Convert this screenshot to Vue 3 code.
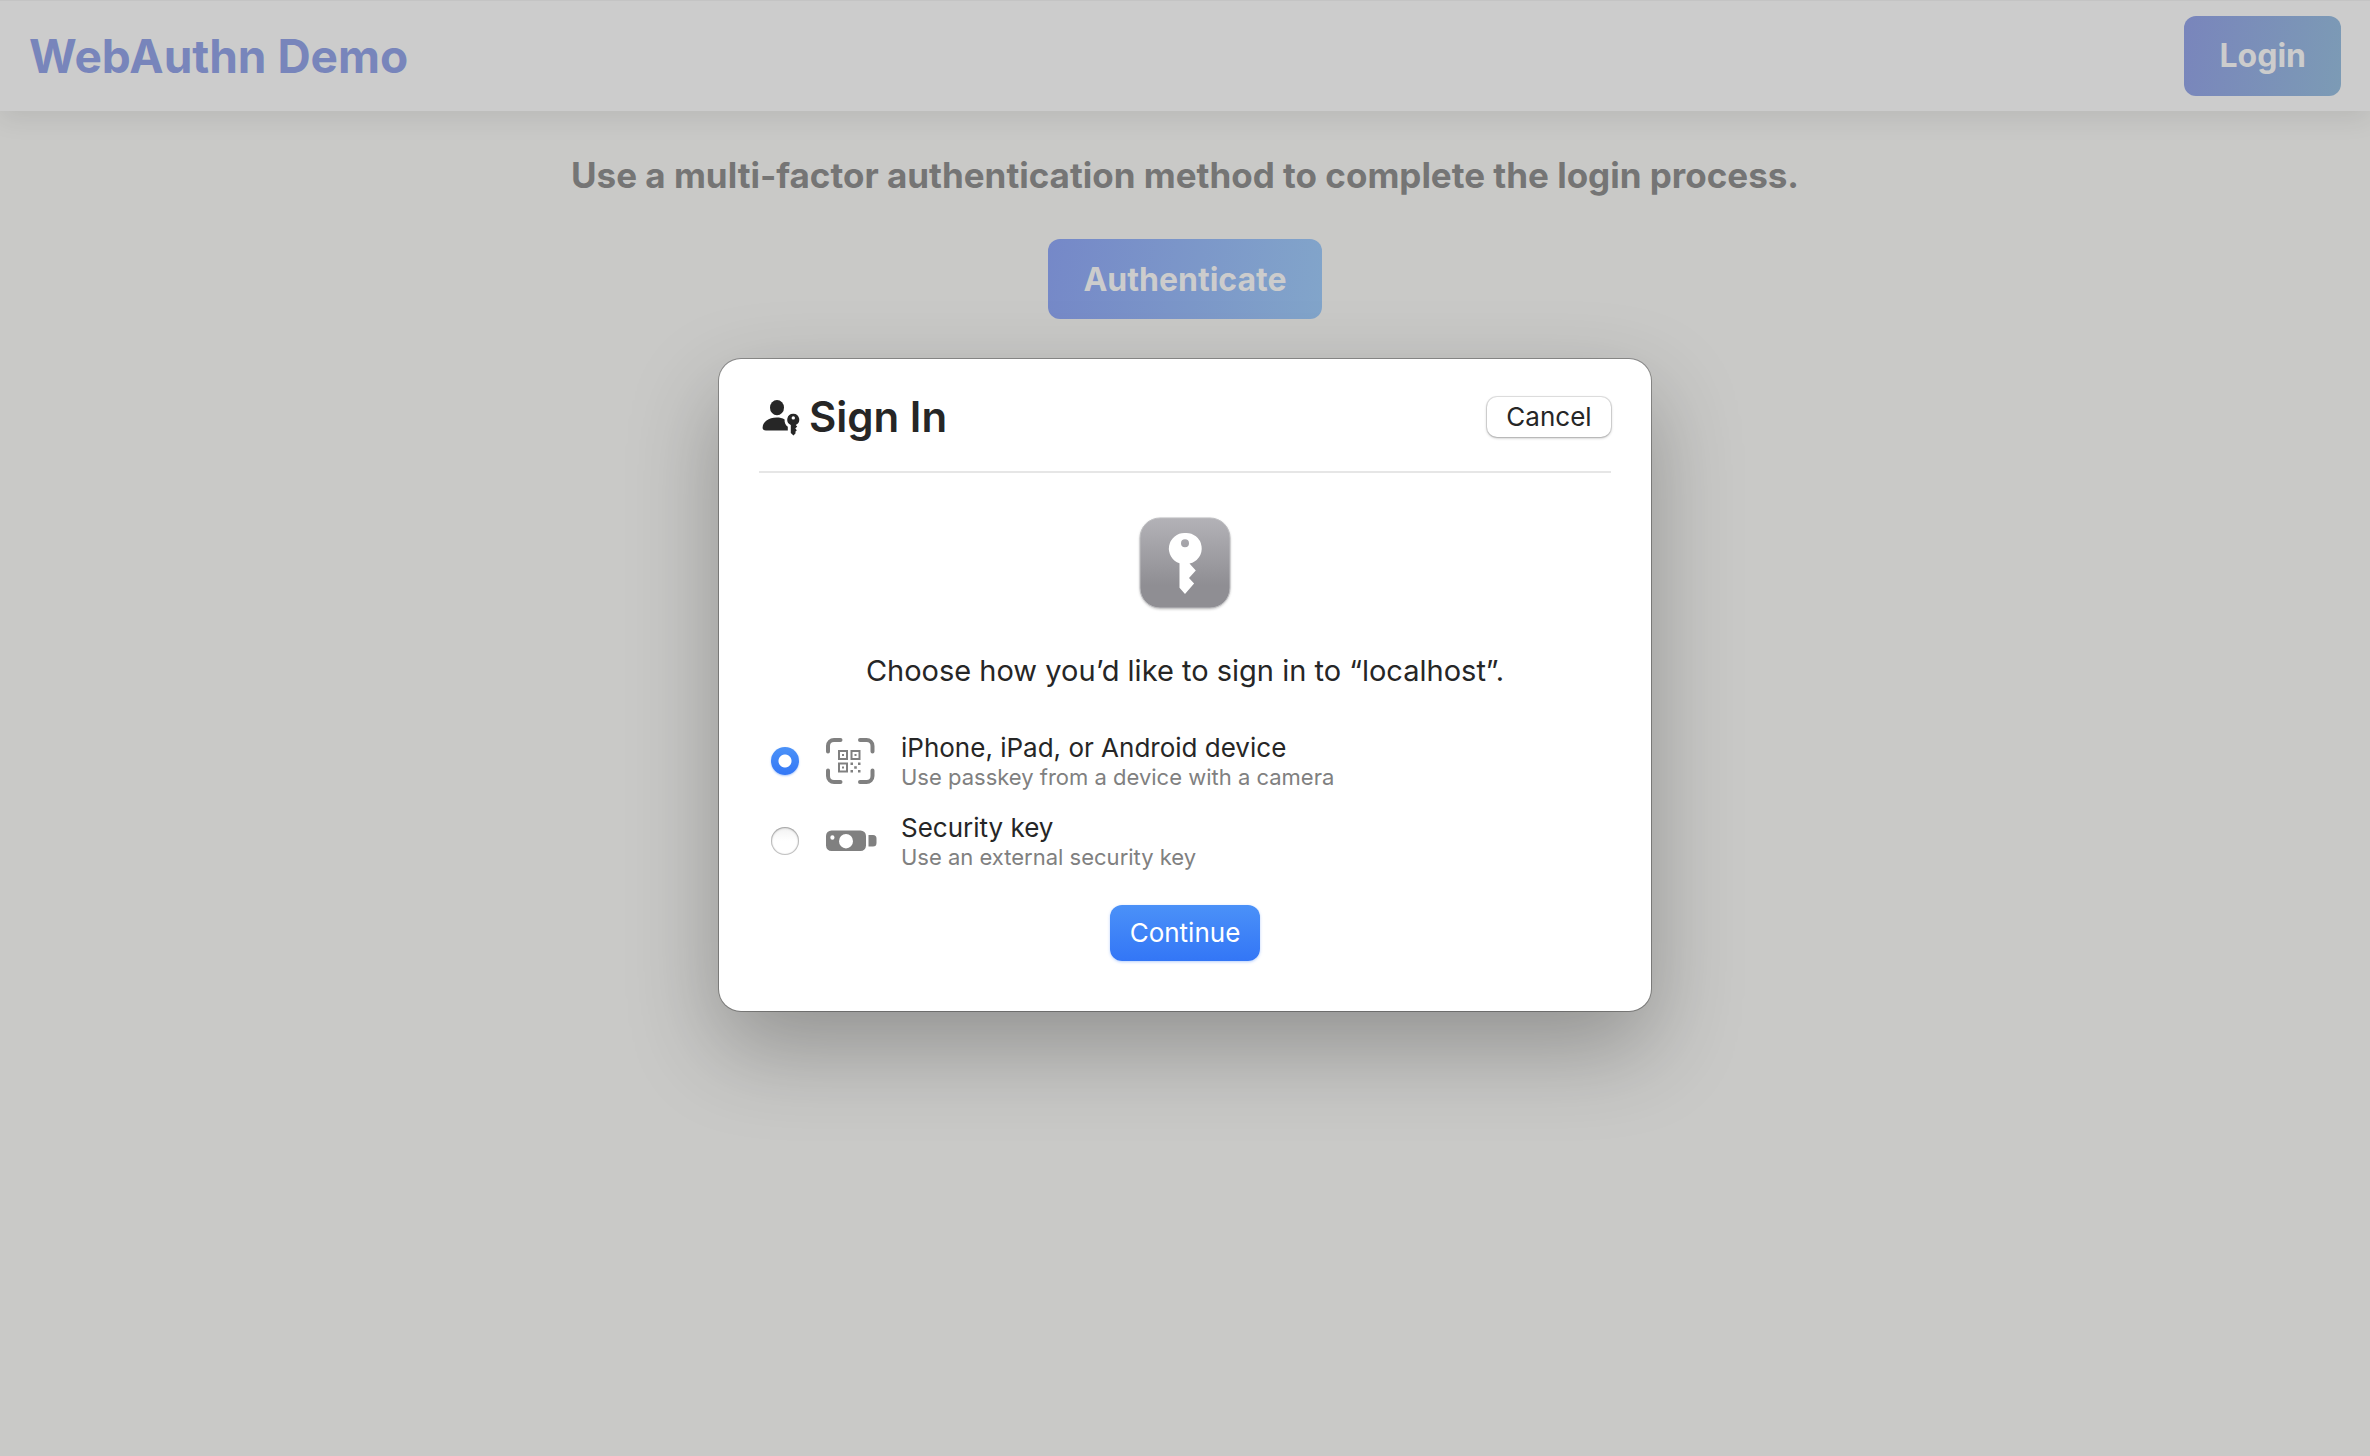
<script setup>
import { ref } from 'vue'

const method = ref('device')
</script>

<template>
  <div class="page">
    <header class="topbar">
      <a class="brand" href="#">WebAuthn Demo</a>
      <button class="btn btn-login" type="button">Login</button>
    </header>

    <main class="content">
      <h1 class="headline">Use a multi-factor authentication method to complete the login process.</h1>
      <button class="btn btn-auth" type="button">Authenticate</button>
    </main>

    <div class="overlay">
      <section class="sheet" role="dialog" aria-modal="true" aria-labelledby="sheet-title">
        <div class="sheet-head">
          <svg class="person" viewBox="0 -2 38 40" width="38" height="40" aria-hidden="true">
            <ellipse cx="15" cy="8.700" rx="7" ry="7.600" fill="#262626" />
            <path d="M4 31.500C1.700 31.500.600 30.500.600 28.500.600 23.500 6.500 18.600 14.800 18.600c3 0 5.600.600 7.800 1.800-.300 3.200 1 5.900 3.200 7.300v3.800z" fill="#262626" />
            <path fill-rule="evenodd" fill="#262626" stroke="#fff" stroke-width="0" d="M31.300 14.700a5.900 5.900 0 0 1 2.400 11.300l1.500 1.600-1.900 2 1.500 1.700-1.600 1.800.6.800-2.300 2.600-2.700-2.500v-8a5.900 5.900 0 0 1 2.500-11.300zm0 2.500a1.700 1.700 0 1 0 0 3.400 1.700 1.700 0 0 0 0-3.400z" />
          </svg>
          <h2 id="sheet-title" class="sheet-title">Sign In</h2>
          <button class="cancel" type="button">Cancel</button>
        </div>

        <svg class="app-icon" viewBox="0 0 92 92" width="92" height="92" aria-hidden="true">
          <defs>
            <linearGradient id="tile" x1="0" y1="0" x2="0" y2="1">
              <stop offset="0" stop-color="#b3b2b7" />
              <stop offset=".75" stop-color="#8f8e93" />
              <stop offset="1" stop-color="#8f8e93" />
            </linearGradient>
          </defs>
          <rect x="1" y="1" width="90" height="90" rx="20" fill="url(#tile)" stroke="#bdbdc0" />
          <path fill="#fff" fill-rule="evenodd" d="M46 16a15.500 15.500 0 0 1 4.500 30.600l6.300 7-6.800 7.400 5.100 5.400L46 77l-5.500-6.200V46.200A15.500 15.500 0 0 1 46 16zm0 6.300a4 4 0 1 0 0 8 4 4 0 0 0 0-8z" />
        </svg>

        <p class="prompt">Choose how you’d like to sign in to “localhost”.</p>

        <form class="form" @submit.prevent>
          <label class="option">
            <input v-model="method" class="radio" type="radio" name="method" value="device" />
            <svg class="glyph" viewBox="0 0 52 48" width="52" height="48" aria-hidden="true">
              <g fill="none" stroke="#808080" stroke-width="4" stroke-linecap="round">
                <path d="M3 14.500V9a6 6 0 0 1 6-6h6.500M35 3h6.500a6 6 0 0 1 6 6v5.500M47.500 33.500V39a6 6 0 0 1-6 6H35M15.500 45H9a6 6 0 0 1-6-6v-5.500" />
              </g>
              <g fill="none" stroke="#808080" stroke-width="2">
                <path d="M14 14h8v8h-8zM26.500 14h8v8h-8zM14 26.500h8v8h-8z" />
              </g>
              <path fill="#808080" d="M17 17h2v2h-2zM29.500 17h2v2h-2zM17 29.500h2v2h-2zM25.500 25.500h2.500v2.500h-2.500zM33 25.500h2.500v2.500H33zM29.200 29.200h2.600v2.600h-2.600zM25.500 33h2.500v2.500h-2.500zM33 33h2.500v2.500H33z" />
            </svg>
            <span class="texts">
              <span class="name">iPhone, iPad, or Android device</span>
              <span class="hint">Use passkey from a device with a camera</span>
            </span>
          </label>

          <label class="option">
            <input v-model="method" class="radio" type="radio" name="method" value="key" />
            <svg class="glyph" viewBox="0 0 52 48" width="52" height="48" aria-hidden="true">
              <path fill="#808080" fill-rule="evenodd" d="M6.500 13.500H35.500a5.500 5.500 0 0 1 5.500 5.500v9.500a5.500 5.500 0 0 1-5.500 5.500H6.500A5.500 5.500 0 0 1 1 28.500V19a5.500 5.500 0 0 1 5.500-5.500zM21 17a7 7.200 0 1 0 0 14.400A7 7.200 0 0 0 21 17zM7.400 18.200a2.100 2.300 0 1 0 0 4.600 2.100 2.300 0 0 0 0-4.600z" />
              <path fill="#808080" d="M43.500 18h4.500a3.500 3.500 0 0 1 3.500 3.500v4.500a3.500 3.500 0 0 1-3.500 3.500h-4.500z" />
            </svg>
            <span class="texts">
              <span class="name">Security key</span>
              <span class="hint">Use an external security key</span>
            </span>
          </label>

          <button class="continue" type="submit">Continue</button>
        </form>
      </section>
    </div>
  </div>
</template>

<style>
body {
  margin: 0;
  background: #c9c9c7;
}
</style>

<style scoped>
.page {
  position: relative;
  min-height: 100vh;
  background: #c9c9c7;
  font-family: Inter, "Liberation Sans", sans-serif;
}

button {
  font-family: inherit;
  border: 0;
  padding: 0;
  cursor: pointer;
}

.topbar {
  box-sizing: border-box;
  display: flex;
  align-items: center;
  justify-content: space-between;
  height: 111px;
  padding: 0 29px;
  background: #ccc;
  box-shadow: inset 0 1px #c4c4c4, 0 8px 24px rgba(0, 0, 0, 0.08);
}

.brand {
  color: #7885bb;
  font-size: 46px;
  font-weight: 700;
  text-decoration: none;
}

.btn {
  height: 80px;
  padding: 0 35px;
  border-radius: 12px;
  color: #ccc;
  font-size: 32px;
  font-weight: 700;
}

.btn-login {
  background: linear-gradient(100deg, #7985bc, #7c9bb5);
}

.btn-auth {
  background: linear-gradient(100deg, #7588c8, #82a5ca);
}

.content {
  display: flex;
  flex-direction: column;
  align-items: center;
  gap: 40px;
  padding-top: 40px;
}

.headline {
  margin: 0;
  color: #757575;
  font-size: 35px;
  line-height: 48px;
  font-weight: 700;
}

.overlay {
  position: absolute;
  inset: 0;
  display: flex;
  align-items: flex-start;
  justify-content: center;
  padding-top: 359px;
}

.sheet {
  box-sizing: border-box;
  width: 932px;
  max-width: 100%;
  padding: 38px 40px 50px;
  border-radius: 22px;
  background: #fff;
  box-shadow: 0 0 0 1px rgba(0, 0, 0, 0.3), 0 36px 90px rgba(0, 0, 0, 0.28);
  color: #262626;
}

.sheet-head {
  display: flex;
  align-items: center;
  padding: 0 0 34px 3px;
  border-bottom: 2px solid #e6e6e6;
}

.sheet-title {
  margin: 0 auto 0 9px;
  font-size: 42px;
  line-height: 40px;
  font-weight: 600;
}

.cancel {
  width: 124px;
  height: 40px;
  padding-bottom: 2px;
  border-radius: 10px;
  background: #fff;
  box-shadow: 0 0 0 1px rgba(0, 0, 0, 0.1), 0 1px 3px rgba(0, 0, 0, 0.3);
  color: #262626;
  font-size: 26px;
}

.app-icon {
  display: block;
  margin: 44px auto;
  filter: drop-shadow(0 1px 1px rgba(0, 0, 0, 0.2));
}

.prompt {
  margin: 0 0 32px;
  font-size: 29px;
  line-height: 36px;
  text-align: center;
}

.form {
  display: flex;
  flex-direction: column;
}

.option {
  display: flex;
  align-items: center;
  height: 80px;
  padding-left: 12px;
}

.radio {
  appearance: none;
  width: 28px;
  height: 28px;
  margin: 0 26px 0 0;
  border-radius: 50%;
  background: linear-gradient(#f2f2f2, #fff 50%);
  box-shadow: inset 0 0 1px 1px rgba(0, 0, 0, 0.25), inset 0 1px 3px rgba(0, 0, 0, 0.15);
}

.radio:checked {
  background: radial-gradient(circle, #fff 6px, transparent 7px), linear-gradient(#4b92f8, #3377f6);
  box-shadow: 0 1px 2px rgba(51, 119, 246, 0.4);
}

.texts {
  display: flex;
  flex-direction: column;
  margin-left: 24px;
  padding-top: 2px;
}

.name {
  font-size: 26px;
  line-height: 30px;
}

.hint {
  color: #808080;
  font-size: 22px;
  line-height: 28px;
}

.continue {
  align-self: center;
  width: 150px;
  height: 56px;
  margin-top: 24px;
  padding-bottom: 2px;
  border-radius: 12px;
  background: linear-gradient(#4b91f8, #3376f6);
  box-shadow: 0 1px 3px rgba(51, 119, 246, 0.35);
  color: #fff;
  font-size: 26px;
}
</style>
